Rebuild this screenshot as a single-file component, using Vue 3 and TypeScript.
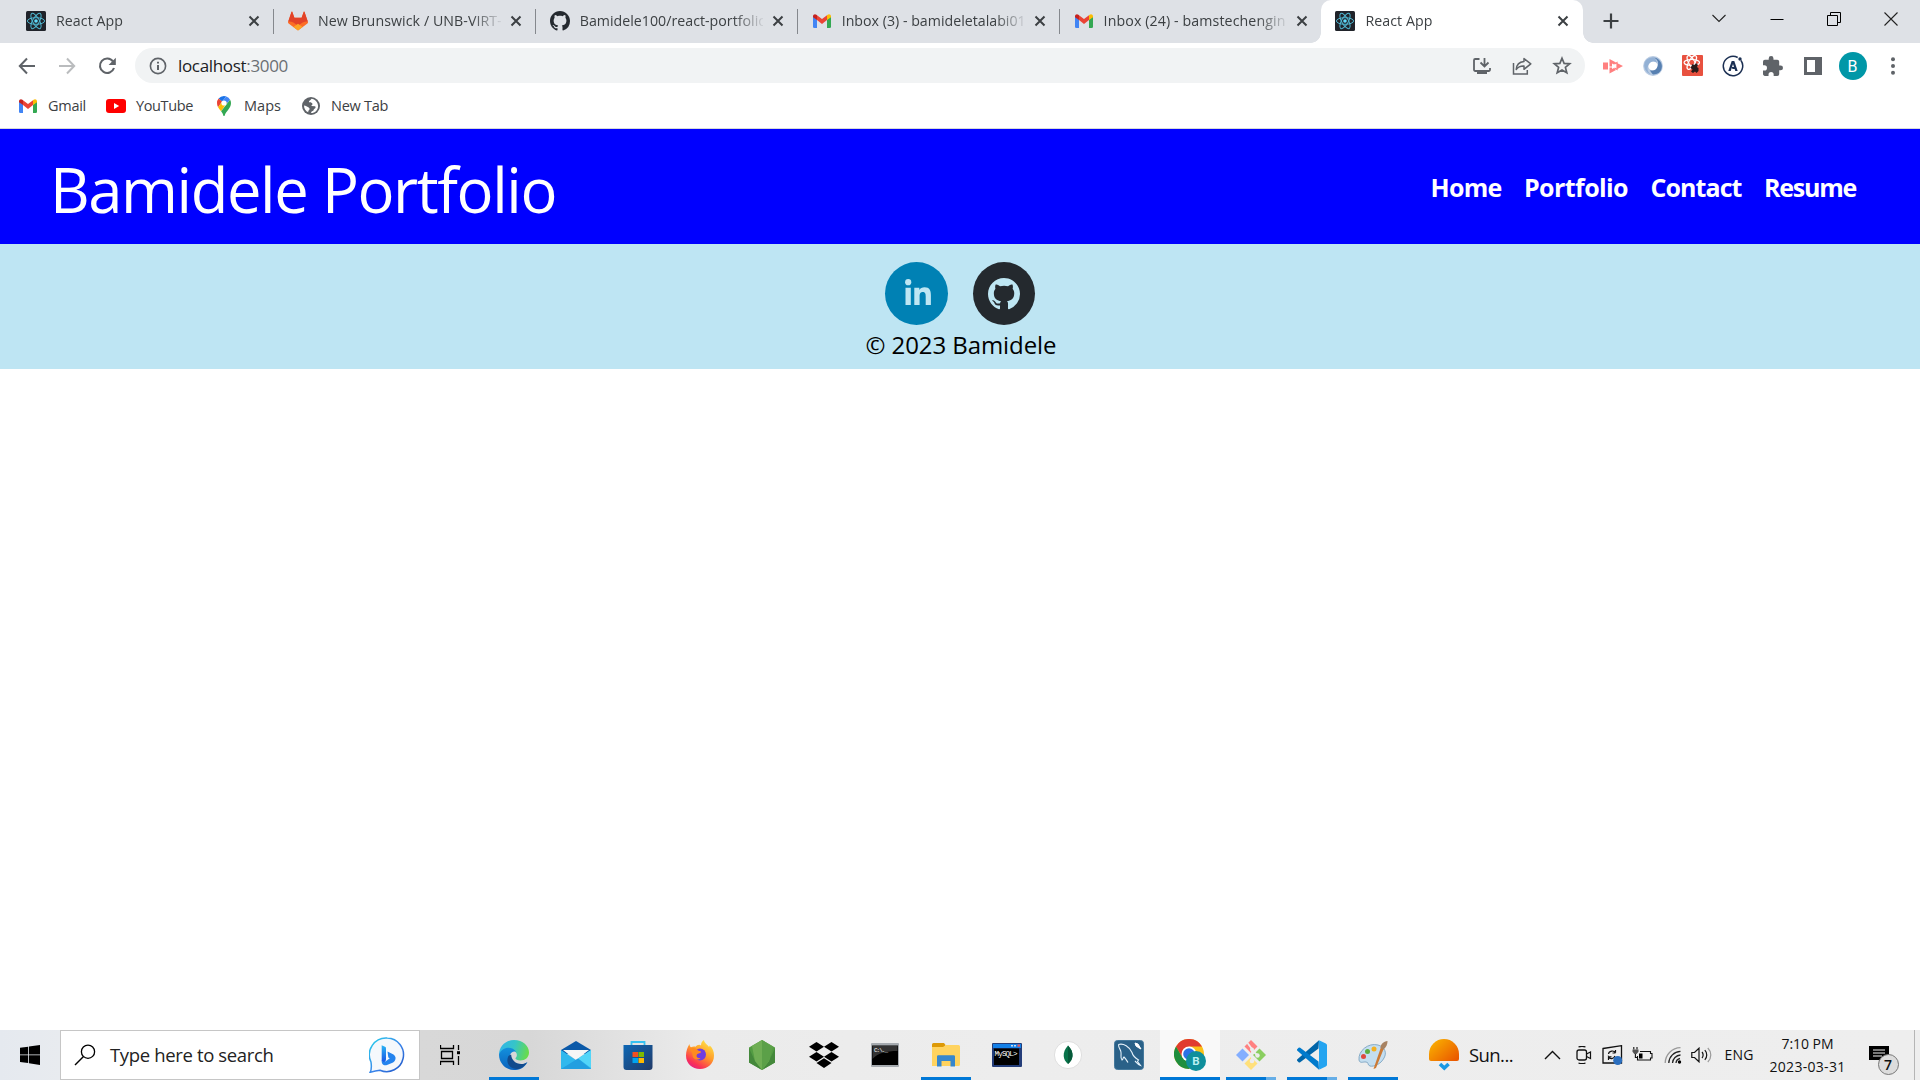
<script setup lang="ts">
import type { ObjectDirective } from 'vue'

interface Glyph { w: number; h: number; vb: string; body: string }
const g = (w: number, h: number, vb: string, body: string): Glyph => ({ w, h, vb, body })

const octocat = 'M8 0C3.58 0 0 3.58 0 8c0 3.54 2.29 6.53 5.47 7.59.4.07.55-.17.55-.38 0-.19-.01-.82-.01-1.49-2.01.37-2.53-.49-2.69-.94-.09-.23-.48-.94-.82-1.13-.28-.15-.68-.52-.01-.53.63-.01 1.08.58 1.23.82.72 1.21 1.87.87 2.33.66.07-.52.28-.87.51-1.07-1.78-.2-3.64-.89-3.64-3.95 0-.87.31-1.59.82-2.15-.08-.2-.36-1.02.08-2.12 0 0 .67-.21 2.2.82.64-.18 1.32-.27 2-.27.68 0 1.36.09 2 .27 1.53-1.04 2.2-.82 2.2-.82.44 1.1.16 1.92.08 2.12.51.56.82 1.27.82 2.15 0 3.07-1.87 3.75-3.65 3.95.29.25.54.73.54 1.48 0 1.07-.01 1.93-.01 2.2 0 .21.15.46.55.38A8.013 8.013 0 0016 8c0-4.42-3.58-8-8-8z'
const orbits = (c: string, w: number) =>
  `<g fill="none" stroke="${c}" stroke-width="${w}"><ellipse cx="10" cy="10" rx="8.6" ry="3.3"/><ellipse cx="10" cy="10" rx="8.6" ry="3.3" transform="rotate(60 10 10)"/><ellipse cx="10" cy="10" rx="8.6" ry="3.3" transform="rotate(120 10 10)"/></g>`
const gmail = g(20, 20, '0 0 20 20', '<path fill="#4285f4" d="M1 5.5l4 3V17H2.3A1.3 1.3 0 0 1 1 15.7z"/><path fill="#34a853" d="M15 8.5l4-3v10.2a1.3 1.3 0 0 1-1.3 1.3H15z"/><path fill="#ea4335" d="M5 4.2l5 3.9 5-3.9v4.9l-5 3.9-5-3.9z"/><path fill="#c5221f" d="M1 5.2c0-2 2.2-2.6 3.4-1.5L5 4.200V9.100L1 6.200z"/><path fill="#fbbc04" d="M19 5.200c0-2-2.200-2.600-3.400-1.500L15 4.200V9.100l4-2.900z"/>')

const icons: Record<string, Glyph> = {
  react: g(20, 20, '0 0 20 20', `<rect width="20" height="20" rx="1.500" fill="#20232a"/>${orbits('#4fb6d0', 1)}<circle cx="10" cy="10" r="1.800" fill="#61dafb"/>`),
  gitlab: g(20, 20, '0 0 20 20', '<path fill="#fc6d26" d="M10 19.500L.6 12.500a1.400 1.400 0 0 1-.5-1.600L3.700.6h.5l2.200 6.200h7.200L15.800.6h.5l3.600 10.300a1.400 1.400 0 0 1-.5 1.600z"/><path fill="#e24329" d="M3.500.700h.700l2.200 6.100h7.200L15.800.700h.7l3.400 10c-3-.5-6 1-9.900 4.100C6.100 11.700 3.100 10.200.1 10.700z"/><path fill="#fca326" d="M5.500 16.100L10 12.800l4.500 3.300L10 19.500z"/>'),
  github: g(20, 20, '0 0 16 16', `<path fill="#24292f" d="${octocat}"/>`),
  gmail,
  close: g(12, 12, '0 0 12 12', '<path d="M1.500 1.500l9 9m0-9l-9 9" stroke="#3c4043" stroke-width="2"/>'),
  plus: g(16, 16, '0 0 16 16', '<path d="M8 .5v15M.5 8h15" stroke="#3c4043" stroke-width="2.200"/>'),
  chevron: g(14, 9, '0 0 14 9', '<path d="M.5 1l6.500 6.500L13.500 1" fill="none" stroke="#222" stroke-width="1.100"/>'),
  minimize: g(14, 14, '0 0 14 14', '<path d="M.5 7.500h13" stroke="#000"/>'),
  restore: g(14, 14, '0 0 14 14', '<path d="M.5 3.500h10v10H.5zM3.500 3V.5h10v10H11" fill="none" stroke="#000"/>'),
  exit: g(14, 14, '0 0 14 14', '<path d="M.5.5l13 13m0-13l-13 13" stroke="#222" stroke-width="1.100"/>'),
  back: g(18, 18, '0 0 18 18', '<path d="M17 9H2m7-7.500L1.800 9 9 16.500" fill="none" stroke="#5f6368" stroke-width="2"/>'),
  forward: g(18, 18, '0 0 18 18', '<path d="M1 9h15M9 1.500L16.200 9 9 16.500" fill="none" stroke="#babcbe" stroke-width="2"/>'),
  reload: g(18, 18, '0 0 18 18', '<path d="M15 4.500A7.200 7.200 0 1 0 16 11" fill="none" stroke="#5f6368" stroke-width="2.100"/><path d="M17.800.7v7.200h-7.200z" fill="#5f6368"/>'),
  info: g(18, 18, '0 0 18 18', '<circle cx="9" cy="9" r="7.600" fill="none" stroke="#5f6368" stroke-width="1.600"/><path d="M9 8v5M9 4.700v1.900" stroke="#5f6368" stroke-width="2"/>'),
  install: g(20, 20, '0 0 20 20', '<path d="M7.500 3H3.200A1.200 1.200 0 0 0 2 4.200v9.600A1.200 1.200 0 0 0 3.200 15h13.600a1.200 1.200 0 0 0 1.200-1.200V12M12.500 2v8.500m-4-4l4 4 4-4" fill="none" stroke="#5f6368" stroke-width="1.800"/><path d="M3 14h14v2h-2v2H5v-2H3z" fill="#5f6368"/>'),
  share: g(20, 20, '0 0 20 20', '<path d="M1.500 7v11h13.800v-4" fill="none" stroke="#5f6368" stroke-width="1.500"/><path d="M12 2.500l6.800 5.400L12 13.300V10c-4-.2-6 1-7.800 3.500C4.500 9 7.500 6 12 5.500z" fill="none" stroke="#5f6368" stroke-width="1.500" stroke-linejoin="round"/>'),
  star: g(20, 20, '0 0 20 20', '<path d="M10 2.300l2.100 5.100 5.600.4-4.300 3.600 1.400 5.400L10 13.900l-4.800 2.900 1.400-5.400-4.300-3.600 5.600-.4z" fill="none" stroke="#5f6368" stroke-width="1.700"/>'),
  record: g(22, 20, '0 0 22 20', '<path d="M1 6.500h5v7H1zM7.500 3l6.500 3.600-2 2-2-1.200v3H7.500zM7.500 11.500H10v1.600l2-1.200 2 2L7.500 17.500zM15 7l6 3-6 3.200z" fill="#ff8080"/><path d="M12.500 8l2.500-1.500v7L12.500 12" fill="none" stroke="#ff8080" stroke-width="1.200"/>'),
  swirl: g(20, 20, '0 0 20 20', '<circle cx="10" cy="10" r="7.300" fill="none" stroke="#b9cbe2" stroke-width="5.200"/><path d="M10 18.500c6 0 9.500-4 8.800-9.500-.7-4-4-7-7.800-7.500 5 3 4.500 6.500 3.500 9-1.200 3-3 4.500-7.500 3.700 1 2 2 3.500 3 4.300z" fill="#5780b1"/><path d="M10.500 1.200C5 1 1 5 1.200 9.800c.2 4 3 7.400 6.500 8.500C3.500 15 4 11 6 8c1.700-2.500 4-3.200 8-1.500-1-3-2-4.500-3.500-5.300z" fill="#93b1d5"/>'),
  reactive: g(21, 21, '0 0 21 21', `<rect width="21" height="21" rx="1" fill="#e8513f"/><g transform="translate(.8 -1.500) scale(.9)">${orbits('#fff', 1.300)}</g><path d="M10.500 9l2 1 1.500-2 2 2-1 2 1.500 1v3l-2 2-1.500-1.500L11 18l-2-1.500 1.500-2L8.500 13z" fill="#281b1a"/>`),
  apollo: g(22, 22, '0 0 22 22', '<path d="M19 5.500a9.700 9.700 0 1 1-3.300-3" fill="none" stroke="#1b2f52" stroke-width="1.500"/><circle cx="18" cy="4" r="1.700" fill="#1b2f52"/><path d="M6.300 16L9.700 6h2.600l3.400 10h-2.400l-2.300-7-2.300 7z" fill="#1b2f52"/><path d="M9.500 12h4v2h-3z" fill="#1b2f52"/>'),
  puzzle: g(20, 20, '2 1 21 21', '<path fill="#5f6368" d="M20.500 11H19V7a2 2 0 0 0-2-2h-4V3.500a2.500 2.500 0 0 0-5 0V5H4a2 2 0 0 0-2 2v3.800h1.500a2.700 2.700 0 0 1 0 5.400H2V20c0 1.100.9 2 2 2h3.800v-1.500a2.700 2.700 0 0 1 5.400 0V22H17a2 2 0 0 0 2-2v-4h1.500a2.500 2.500 0 0 0 0-5z"/>'),
  panel: g(18, 18, '0 0 18 18', '<path fill="#5f6368" d="M0 0h18v18H0zM3 3v12h8V3z" fill-rule="evenodd"/>'),
  more: g(6, 18, '0 0 6 18', '<g fill="#5f6368"><circle cx="3" cy="2.200" r="2"/><circle cx="3" cy="9" r="2"/><circle cx="3" cy="15.800" r="2"/></g>'),
  youtube: g(20, 14, '0 0 20 14', '<rect width="20" height="14" rx="3" fill="#f00"/><path d="M8 4l5.200 3L8 10z" fill="#fff"/>'),
  maps: g(14, 20, '0 0 14 20', '<path d="M7 0a7 7 0 0 0-5.400 2.500l3.500 3L9.300.4A7 7 0 0 0 7 0z" fill="#1a73e8"/><path d="M1.600 2.500A7 7 0 0 0 0 7c0 1.600.4 3 1.100 4.200l4-5.700z" fill="#ea4335"/><path d="M9.300.4L5.100 5.500l3.800 3.300 4.200-5A7 7 0 0 0 9.300.4z" fill="#4285f4"/><path d="M1.100 11.200c.7 1.300 1.800 2.500 3 4l6-8.800-5-.9z" fill="#fbbc04"/><path d="M13.100 3.800l-9 11.400C5.500 17 6 18.200 6.300 19.400c.2.800 1.200.8 1.400 0C8.700 15.500 14 12.500 14 7c0-1.100-.3-2.200-.9-3.200z" fill="#34a853"/><circle cx="7" cy="7" r="2.600" fill="#fff"/>'),
  globe: g(18, 18, '0 0 18 18', '<circle cx="9" cy="9" r="9" fill="#5f6368"/><path d="M9.500 1.800c-.8 1.700-2.700 1.500-2.600 3.500 1 .6 3.300-.2 3.500 1.600.2 1.200-1.300 1.100-1.100 2.200L13 9.300c1 .5.700 2-.5 2.400-1 .4-.7 2-1.800 2.400-1 .4-1.600 1.200-1.700 2 3.800.2 7.100-2.700 7.100-7 0-3.600-3-7-6.600-7.300zM2 8.400c0 3 1.500 5.600 4.300 6.900-.3-1.500.5-1.800 1.200-2.700.4-.8-.2-2.100-1.200-2.400C5 9.800 4 8.400 2 8.400z" fill="#fff"/>'),
  linkedin: g(26, 26, '0 0 26 26', '<g fill="#bee6f3"><circle cx="3.200" cy="3.200" r="3.100"/><path d="M.5 8.700h5.300V26H.5zM9.300 8.700h5v2.400c1-1.800 2.800-2.800 5.200-2.800 5.200 0 6.400 3.400 6.400 8V26h-5.200v-8.500c0-2.200-.2-4.500-2.900-4.500-2.700 0-3.200 2.200-3.200 4.400V26H9.300z"/></g>'),
  octocat: g(32, 32, '0 0 16 16', `<path fill="#bee6f3" d="${octocat}"/>`),
  windows: g(20, 20, '0 0 20 20', '<path d="M0 2.800l8.200-1.100v7.700H0zM9 1.600L20 0v9.400H9zM0 10.300h8.200v7.800L0 17zM9 10.300h11v9.600L9 18.300z"/>'),
  search: g(22, 22, '0 0 22 22', '<circle cx="14" cy="7.700" r="6.600" fill="none" stroke="#000" stroke-width="1.300"/><path d="M9.500 12.500L1 21" stroke="#000" stroke-width="1.500"/>'),
  bing: g(36, 36, '0 0 36 36', '<defs><linearGradient id="bg1" x1="0" y1="0" x2="1" y2="1"><stop stop-color="#27d3ec"/><stop offset=".55" stop-color="#3b84ea"/><stop offset="1" stop-color="#1d53c4"/></linearGradient><linearGradient id="bg2" x1="0" y1="0" x2="0" y2="1"><stop stop-color="#2bb4f4"/><stop offset="1" stop-color="#1853e5"/></linearGradient></defs><path d="M18.300 1A16.800 16.800 0 1 1 11 33.200c-3.500.3-6.500 1-9.800 2C3 32 2.500 29.500 2 25A16.800 16.800 0 0 1 18.300 1z" fill="#f5f8fc" stroke="url(#bg1)" stroke-width="1.500"/><path d="M12.700 8.300l3.300 1.400c.7.300 1 .8 1 1.500V22c0 4-4.300 4.500-4.300 1z" fill="url(#bg2)"/><path d="M18.500 14.500l6 3c4 3 1.500 7-1 8.300L18 28c-3 1.200-6-1-5.200-5 .8 2.500 3 2 5 .5l3-2.200-1.500-.8z" fill="#2483ee"/>'),
  taskview: g(21, 20, '0 0 21 20', '<path d="M.5 0v3.500h13V0M.5 20v-3.500h13V20M1.500 6.500h11v7h-11zM18.500 0v5m0 6v9" fill="none" stroke="#000" stroke-width="1.300"/><path d="M17 6.200h3v3h-3z"/>'),
  edge: g(30, 30, '0 0 30 30', '<defs><linearGradient id="e1" x1="0" y1=".3" x2="1" y2=".5"><stop stop-color="#31b5e8"/><stop offset=".5" stop-color="#36c5c7"/><stop offset="1" stop-color="#69dc49"/></linearGradient><linearGradient id="e2" x1="0" y1="0" x2="0" y2="1"><stop stop-color="#1390dc"/><stop offset="1" stop-color="#0b62bd"/></linearGradient></defs><path d="M0 15C0 6 7 0 15 0c9 0 15 6 15 12.500 0 5-4 8-8.500 8-3.500 0-5.500-1.300-5-2.500 1.500-1.300 2-4 .3-5.800C12 7 4 7.500 0 15z" fill="url(#e1)"/><path d="M0 14.500C3 6.500 13 5.500 17.500 12c-1.500-1-6-.5-6.500 4-.5 7 6 13.500 17.500 6C25 28.500 20 30 15 30 7 30 0 23.500 0 14.500z" fill="url(#e2)"/><path d="M9 17c-3 8 5 14 12 11.500 3-1 5.500-3.500 7-6C20 27 12 21 12.200 14.500 10.500 15 9.500 15.500 9 17z" fill="#114b8d"/>'),
  mail: g(30, 28, '0 0 30 28', '<path d="M0 9L15 0l15 9v4H0z" fill="#0b59a8"/><path d="M2 9h26L15 19z" fill="#f6f6f6"/><path d="M0 9l15 10L30 9v19H0z" fill="#31b8ed"/><path d="M17 17.500L30 27V9z" fill="#53d5f8"/><path d="M0 28L17 17.500 30 28z" fill="#239fe0"/>'),
  store: g(30, 30, '0 0 30 30', '<defs><linearGradient id="s1" x1="0" y1="0" x2="1" y2="1"><stop stop-color="#0d67b5"/><stop offset="1" stop-color="#223a67"/></linearGradient></defs><path d="M8.500 6V2h13v4" fill="none" stroke="#35c1f1" stroke-width="1.800"/><path d="M.5 5h29v22a3 3 0 0 1-3 3h-23a3 3 0 0 1-3-3z" fill="url(#s1)"/><path fill="#f25022" d="M9.500 12H15v5H9.500z"/><path fill="#7fba00" d="M15.500 12H21v5h-5.500z"/><path fill="#00a4ef" d="M9.500 18H15v5H9.500z"/><path fill="#ffb900" d="M15.500 18H21v5h-5.500z"/>'),
  firefox: g(30, 30, '0 0 30 30', '<defs><linearGradient id="f1" x1=".8" y1="0" x2=".2" y2="1"><stop stop-color="#ffe94a"/><stop offset=".45" stop-color="#ff9a29"/><stop offset=".8" stop-color="#fb3553"/><stop offset="1" stop-color="#e01b8b"/></linearGradient></defs><path d="M4.500 4c0 1.500.5 2.500 1.500 3.300 1.500-.8 3-1 4.500-.6C12 4.500 15 4 16 5.500c0-2.500 1-4.500 3-5.500 0 3 3.500 4.500 5 7l.8-1.500C28 8 29 12 29 15.500 29 23.500 23 29 15 29S1 23.500 1 15.500C1 11 2.500 7 4.500 4z" fill="url(#f1)"/><circle cx="15" cy="14.500" r="6" fill="#713de0"/><path d="M4 9c4-2 8-1 9 1.500l3 1c0 2-3 1.800-4 3-1.300 2 .5 4 3.500 3.500-3 3-8 1.500-8-3C7.500 12.500 6 11 4 9z" fill="#ff8b20"/>'),
  node: g(26, 30, '0 0 26 30', '<path d="M13 0l13 7.500v15L13 30 0 22.500v-15z" fill="#539c43"/><path d="M0 8l6 13 7 9L0 22.500zM26 8l-6 13-7 9 13-7.500z" fill="#44883b"/><path d="M3 6l10-6 10 6-3 15-7 9-7-9z" fill="#6fae54"/><path d="M13 0v30l7-9 4-14z" fill="#5ba048"/>'),
  dropbox: g(30, 26, '0 0 30 26', '<path d="M7.500 0L15 4.800 7.500 9.600 0 4.800zM22.500 0L30 4.800l-7.500 4.800L15 4.800zM7.500 9.900l7.500 4.800-7.500 4.800L0 14.700zM22.500 9.900l7.500 4.800-7.500 4.800-7.500-4.800zM15 16.200l7.500 4.800L15 26l-7.500-5z"/>'),
  cmd: g(28, 24, '0 0 28 24', '<rect width="28" height="24" rx="1" fill="#a6abb0"/><path d="M1 2.500h26V22H1z" fill="#000"/><path d="M1.500 3h25v5c-11 0-20 2-25 8z" fill="#333"/><text x="3" y="8.500" fill="#fff" font-family="Liberation Mono, monospace" font-size="6" textLength="14">C:\\._</text>'),
  folder: g(28, 24, '0 0 28 24', '<path d="M0 1.500A1.500 1.500 0 0 1 1.500 0H12l1.500 2-1 3H0z" fill="#dd9906"/><path d="M0 4h11l3-2h12.500A1.500 1.500 0 0 1 28 3.500v18a1.500 1.500 0 0 1-1.500 1.500H0z" fill="#ffd35f"/><path d="M5 23.500v-10a1.300 1.300 0 0 1 1.300-1.300h15.400a1.300 1.300 0 0 1 1.300 1.300v10h-4.500V18h-9v5.500z" fill="#3787cd"/>'),
  mysql: g(30, 24, '0 0 30 24', '<rect width="30" height="24" rx="1" fill="#243d79"/><path d="M1 1h28v4H1z" fill="#1480e8"/><path d="M19 2h2v1.500h-2zM22 2h2v1.500h-2z" fill="#cde"/><path d="M25.500 1.500H28v2.200h-2.500z" fill="#e55"/><path d="M2 5.500h25V22H2z" fill="#000"/><text x="2.500" y="13" fill="#fff" font-family="Liberation Mono, monospace" font-size="7.500" textLength="23">MySQL&gt;</text>'),
  mongo: g(28, 28, '0 0 28 28', '<circle cx="14" cy="14" r="13.600" fill="#fff" stroke="#d4d4d4" stroke-width=".7"/><path d="M14 4.500c7 7 5 14.500 0 18.500-5-4-6.500-11.500 0-18.500z" fill="#08734a"/><path d="M14 4.500c7 7 5 14.500 0 18.500z" fill="#065a3a"/>'),
  workbench: g(30, 30, '0 0 30 30', '<rect x=".5" y=".5" width="29" height="29" rx="3" fill="#2a6188" stroke="#45799c"/><path d="M4.500 4.500c5-1.500 11 2 13.500 8 1 4 4 6 6.500 7.500l-1 1.500 3 4c-3-1-4-3-5.500-4.500M4.500 4.500c0 4 2.500 5 2.500 8 .5 3-1 5 1 7.500 1.500-1 1-3 2-3 2 2 3 4 4 5.500" fill="none" stroke="#e6f2fa" stroke-width="1.100"/><path d="M21 3l1 3 3 2 2 1-3-5z" fill="#fff" stroke="#fff"/>'),
  chrome: g(32, 32, '0 0 32 32', '<circle cx="15" cy="15" r="15" fill="#fbc116"/><path d="M2 7.500A15 15 0 0 1 28 7.500H15L8.500 18.700z" fill="#e13b2f"/><path d="M2 7.500A15 15 0 0 0 15 30l6.500-11.200H8.500z" fill="#1f8e3e"/><circle cx="15" cy="15" r="7.500" fill="#fff"/><circle cx="15" cy="15" r="5.800" fill="#2a72e5"/><circle cx="22" cy="22" r="10" fill="#0f8f9c"/><text x="22" y="26" text-anchor="middle" fill="#b8f0f2" font-family="Roboto, sans-serif" font-size="11.500" font-weight="700">B</text>'),
  git: g(32, 32, '0 0 32 32', '<path d="M16 1l6.500 6.500L16 14 9.500 7.500z" fill="#ff8080"/><path d="M7.500 9.500L14 16l-6.500 6.500L1 16z" fill="#83aeff"/><path d="M24.500 9.500L31 16l-6.500 6.500L18 16z" fill="#8ace60"/><path d="M16 18l6.500 6.500L16 31l-6.500-6.500z" fill="#ffe07b"/><path d="M12.500 4l4.500 6v12M17 11l5 5" fill="none" stroke="#ededed" stroke-width="1.800"/><g fill="#ededed"><circle cx="17" cy="10.500" r="2"/><circle cx="17" cy="22" r="2.300"/><circle cx="22.500" cy="16.500" r="2.200"/></g>'),
  vscode: g(30, 30, '0 0 30 30', '<path d="M21.500 8.500L3.200 22.300a1.300 1.300 0 0 1-1.600 0L.4 21a1.200 1.200 0 0 1 0-1.800L22 .2z" fill="#0065a9"/><path d="M21.500 21.500L3.200 7.700a1.300 1.300 0 0 0-1.600 0L.4 9a1.200 1.200 0 0 0 0 1.800L22 29.800z" fill="#007acc"/><path d="M22 .2l6.800 3.200A2 2 0 0 1 30 5.200v19.600a2 2 0 0 1-1.200 1.800L22 29.800c.5-.6.3-1 0-1.500V1.700c.3-.5.200-1 0-1.500z" fill="#24a4f0"/>'),
  paint: g(30, 30, '0 0 30 30', '<path d="M1 20C0 11 10 2.500 20 5c7 2 9 8 6 13-3 6-10 9-14 8-3-1-1-4-4-4-3-.5-6 2-7-2z" fill="#c4def0" stroke="#86abc6"/><circle cx="5.500" cy="16.500" r="2.500" fill="#df4940"/><circle cx="9.500" cy="11.500" r="2.500" fill="#5cae40"/><circle cx="16" cy="9" r="2.500" fill="#f3b020"/><path d="M15.500 29L23 7l3 1-8 20z" fill="#cc7a35"/><path d="M22.500 8c0-4 3-6.500 7-7 0 3-1 6-4 8.500z" fill="#a78262"/>'),
  sunset: g(30, 32, '0 0 30 32', '<defs><linearGradient id="w1" x1="0" y1="0" x2="1" y2=".8"><stop stop-color="#fbb800"/><stop offset="1" stop-color="#ea5a00"/></linearGradient></defs><path d="M2 22a2 2 0 0 1-2-2v-5a15 15 0 0 1 30 0v5a2 2 0 0 1-2 2z" fill="url(#w1)"/><path d="M11 25l4.300 4 4.300-4" fill="none" stroke="#1998e3" stroke-width="3.600"/>'),
  up: g(17, 10, '0 0 17 10', '<path d="M1 9l7.500-7.500L16 9" fill="none" stroke="#111" stroke-width="1.400"/>'),
  camera: g(16, 18, '0 0 16 18', '<rect x="1" y="4" width="9.500" height="10" rx="2" fill="none" stroke="#111" stroke-width="1.300"/><path d="M10.500 8l4-2v6.500l-4-2M2.500 1c2-.8 5-.8 7 0m-7 16c2 .8 5 .8 7 0" fill="none" stroke="#111" stroke-width="1.200"/>'),
  sync: g(21, 20, '0 0 21 20', '<path d="M1 3.500L19.500.7V18H1z" fill="none" stroke="#111" stroke-width="1.300"/><path d="M6.500 9c.5-3.500 5.500-4 7-1.200V5m0 3h-3M13 11c-1 3-5 3.500-6.500 1v3m0-3.200h3" fill="none" stroke="#111" stroke-width="1.200"/><circle cx="15.700" cy="15.500" r="4.500" fill="#2b6fbf"/>'),
  battery: g(21, 16, '0 0 21 16', '<path d="M8 4.500h10.500v2H20v4.500h-1.500v2h-13V9" fill="none" stroke="#111" stroke-width="1.100"/><path d="M1.800 0v2.500M5 0v2.500M3.400 7v3.500h2" fill="none" stroke="#111" stroke-width="1.100"/><path d="M.5 2.500h6v2.300L4.600 7H2.300L.5 4.800z" fill="#555"/><path d="M7 6.500h3.500v5H7z"/>'),
  wifi: g(18, 18, '0 0 18 18', '<g fill="none" stroke="#222" stroke-width="1.300"><path d="M12 17a5 5 0 0 1 4-4.500M8.500 17A8.500 8.500 0 0 1 16.500 9M4.800 17A12 12 0 0 1 16.500 5.400"/><path d="M1.200 17A15.500 15.500 0 0 1 16.500 1.700" stroke="#999"/></g><circle cx="15.500" cy="16" r="1.700"/>'),
  speaker: g(21, 16, '0 0 21 16', '<path d="M.8 5.500h2.700L8 1.200v13.600l-4.500-4.300H.8z" fill="none" stroke="#111" stroke-width="1.200"/><path d="M11 5c1.500 1.600 1.500 4.400 0 6M13.800 3.200c2.600 2.600 2.600 7 0 9.600" fill="none" stroke="#111" stroke-width="1.200"/><path d="M16.800 1c4 4 4 10 0 14" fill="none" stroke="#999" stroke-width="1.200"/>'),
  notice: g(20, 20, '0 0 20 20', '<path d="M0 1h20v14h-6l-4 4v-4H0z"/><path d="M4 5h12M4 8h12M4 11h9" stroke="#eee" stroke-width="1.200"/>'),
}

/* Spreads a label's letters so that it takes up the given number of pixels. */
const vFit: ObjectDirective<HTMLElement, number> = {
  mounted(el, { value }) {
    const n = (el.textContent ?? '').trim().length
    const natural = el.getBoundingClientRect().width
    el.style.letterSpacing = `${(value - natural) / n}px`
  },
}

const tabs = [
  { icon: 'react', title: 'React App', fit: 67 },
  { icon: 'gitlab', title: 'New Brunswick / UNB-VIRT-', fit: 184 },
  { icon: 'github', title: 'Bamidele100/react-portfolio', fit: 187 },
  { icon: 'gmail', title: 'Inbox (3) - bamideletalabi01', fit: 184 },
  { icon: 'gmail', title: 'Inbox (24) - bamstechengin', fit: 182 },
  { icon: 'react', title: 'React App', fit: 67, active: true },
]
const bookmarks = [
  { icon: 'gmail', title: 'Gmail', fit: 38, w: 88 },
  { icon: 'youtube', title: 'YouTube', fit: 57, w: 108 },
  { icon: 'maps', title: 'Maps', fit: 37, w: 87 },
  { icon: 'globe', title: 'New Tab', fit: 57, w: 100 },
]
const pageActions = ['install', 'share', 'star']
const extensions = ['record', 'swirl', 'reactive', 'apollo', 'puzzle', 'panel']
const links = [
  { title: 'Home', fit: 71 },
  { title: 'Portfolio', fit: 104 },
  { title: 'Contact', fit: 91 },
  { title: 'Resume', fit: 92 },
]
const apps = [
  { icon: 'edge', state: 'open' }, { icon: 'mail' }, { icon: 'store' }, { icon: 'firefox' },
  { icon: 'node' }, { icon: 'dropbox' }, { icon: 'cmd' }, { icon: 'folder', state: 'open' },
  { icon: 'mysql' }, { icon: 'mongo' }, { icon: 'workbench' }, { icon: 'chrome', state: 'focused' },
  { icon: 'git', state: 'stacked' }, { icon: 'vscode', state: 'stacked' }, { icon: 'paint', state: 'open' },
]

const Icon = (props: { name: string }) => {
  const i = icons[props.name]
  return h('svg', { width: i.w, height: i.h, viewBox: i.vb, innerHTML: i.body, class: 'glyph' })
}
Icon.props = ['name']
</script>

<script lang="ts">
import { h } from 'vue'
</script>

<template>
  <div class="screen">
    <div class="tabstrip">
      <div v-for="(t, i) in tabs" :key="i" class="tab" :class="{ active: t.active }">
        <span class="favicon"><Icon :name="t.icon" /></span>
        <span class="tab-title"><span v-fit="t.fit">{{ t.title }}</span></span>
        <Icon name="close" />
      </div>
      <div class="new-tab"><Icon name="plus" /></div>
      <div class="window-buttons">
        <span><Icon name="chevron" /></span>
        <span><Icon name="minimize" /></span>
        <span><Icon name="restore" /></span>
        <span><Icon name="exit" /></span>
      </div>
    </div>

    <div class="toolbar">
      <div class="cell"><Icon name="back" /></div>
      <div class="cell"><Icon name="forward" /></div>
      <div class="cell"><Icon name="reload" /></div>
      <div class="omnibox">
        <Icon name="info" />
        <span class="url"><span v-fit="110">localhost<span class="port">:3000</span></span></span>
        <div v-for="a in pageActions" :key="a" class="cell"><Icon :name="a" /></div>
      </div>
      <div v-for="e in extensions" :key="e" class="cell"><Icon :name="e" /></div>
      <div class="cell"><span class="avatar">B</span></div>
      <div class="cell"><Icon name="more" /></div>
    </div>

    <div class="bookmarks">
      <div v-for="b in bookmarks" :key="b.title" class="bookmark" :style="{ width: b.w + 'px' }">
        <span class="mark"><Icon :name="b.icon" /></span>
        <span v-fit="b.fit">{{ b.title }}</span>
      </div>
    </div>

    <header class="site-header">
      <h1><span v-fit="506">Bamidele Portfolio</span></h1>
      <nav>
        <a v-for="l in links" :key="l.title"><span v-fit="l.fit">{{ l.title }}</span></a>
      </nav>
    </header>
    <footer class="site-footer">
      <div class="social">
        <a class="linkedin"><Icon name="linkedin" /></a>
        <a class="gh"><Icon name="octocat" /></a>
      </div>
      <p><span v-fit="191">© 2023 Bamidele</span></p>
    </footer>
    <main></main>

    <div class="taskbar">
      <div class="start"><Icon name="windows" /></div>
      <div class="search">
        <Icon name="search" />
        <span class="hint"><span v-fit="163.5">Type here to search</span></span>
        <Icon name="bing" />
      </div>
      <div class="start"><Icon name="taskview" /></div>
      <div class="apps">
        <div v-for="a in apps" :key="a.icon" class="app" :class="a.state"><Icon :name="a.icon" /></div>
      </div>
      <div class="tray">
        <Icon name="sunset" />
        <span class="weather"><span v-fit="44">Sun...</span></span>
        <Icon name="up" />
        <Icon name="camera" />
        <Icon name="sync" />
        <Icon name="battery" />
        <Icon name="wifi" />
        <Icon name="speaker" />
        <span class="lang"><span v-fit="29">ENG</span></span>
        <div class="clock">
          <span v-fit="52">7:10 PM</span>
          <span v-fit="76">2023-03-31</span>
        </div>
        <div class="notice"><Icon name="notice" /><b>7</b></div>
      </div>
    </div>
  </div>
</template>

<style>
body { margin: 0; overflow: hidden; }
.glyph { display: block; flex: none; }
</style>

<style scoped>
.screen { width: 1920px; height: 1080px; display: flex; flex-direction: column; background: #fff; font-family: "Open Sans", "Noto Sans", sans-serif; color: #3c4043; overflow: hidden; white-space: pre; }
.tabstrip { height: 43px; background: #dee1e6; display: flex; padding-left: 12px; flex: none; }
.tab { width: 261.9px; box-sizing: border-box; display: flex; align-items: center; padding: 0 13px 1px 14px; position: relative; font-size: 14.2px; flex: none; }
.tab + .tab:not(.active)::before { content: ""; position: absolute; left: -1px; top: 9px; width: 1px; height: 25px; background: #85888d; }
.favicon { width: 20px; margin-right: 10px; display: flex; justify-content: center; }
.tab-title { width: 183px; margin-right: 9px; overflow: hidden; line-height: 22px; -webkit-mask-image: linear-gradient(90deg, #000 153px, transparent 186px); mask-image: linear-gradient(90deg, #000 153px, transparent 186px); }
.tab.active { background: #fff; border-radius: 10px 10px 0 0; }
.tab.active::before, .tab.active::after { content: ""; position: absolute; bottom: 0; width: 10px; height: 10px; }
.tab.active::before { left: -10px; background: radial-gradient(circle at 0 0, transparent 9.5px, #fff 10px); }
.tab.active::after { right: -10px; background: radial-gradient(circle at 100% 0, transparent 9.5px, #fff 10px); }
.new-tab { margin: 13px 0 0 20px; }
.window-buttons { margin-left: auto; display: flex; height: 37px; align-items: center; }
.window-buttons span { width: 57.3px; display: flex; justify-content: center; }

.toolbar { height: 45px; padding: 0 8px 0 7px; display: flex; align-items: center; flex: none; }
.cell { width: 40px; height: 35px; display: flex; align-items: center; justify-content: center; flex: none; }
.omnibox { width: 1450px; height: 35px; margin: 0 7.500px 0 8px; box-sizing: border-box; padding: 0 3px 0 14px; background: #f1f3f4; border-radius: 18px; display: flex; align-items: center; flex: none; }
.url { flex: 1; margin-left: 11px; font-size: 17px; line-height: 35px; color: #202124; }
.port { color: #6b6f73; }
.avatar { width: 28px; height: 28px; border-radius: 50%; background: #0097a7; color: #fff; font: 16px/29px Roboto, sans-serif; text-align: center; }

.bookmarks { height: 40px; border-bottom: 1px solid #d5d8dc; padding: 0 0 0 18px; display: flex; align-items: center; flex: none; font-size: 14.500px; line-height: 22px; }
.bookmark { display: flex; align-items: center; padding-bottom: 5px; flex: none; }
.mark { width: 20px; margin-right: 10px; display: flex; justify-content: center; }

.site-header { height: 115px; background: #00f; color: #fff; display: flex; justify-content: space-between; padding: 0 64px 0 50px; flex: none; }
h1 { margin: 0; font-weight: 400; font-size: 61.500px; line-height: 120px; }
nav { display: flex; gap: 22.500px; font-size: 25px; font-weight: 700; line-height: 116px; }
.site-footer { height: 125px; background: #bee5f3; color: #000; display: flex; flex-direction: column; align-items: center; flex: none; }
.social { display: flex; gap: 25px; margin-top: 18px; }
.social a { width: 63px; height: 63px; border-radius: 50%; display: flex; align-items: center; justify-content: center; }
.social .linkedin { background: #0081b4; box-sizing: border-box; padding: 0 0 3px 2px; width: 63px; }
.social .gh { background: #24292e; width: 62px; }
.site-footer p { margin: 2px 0 0 2px; font-size: 24px; line-height: 36px; }
main { flex: 1; }

.taskbar { height: 50px; flex: none; display: flex; background: linear-gradient(90deg, #e5e9ef 0, #e8ebef 60px, #d8d8d8 420px, #d7d7d7 530px, #ebebeb 700px, #ededed 1000px, #eee); color: #111; }
.start { width: 60px; display: flex; align-items: center; justify-content: center; flex: none; }
.search { width: 360px; box-sizing: border-box; border: 1px solid #c6c6c6; background: #fff; display: flex; align-items: center; padding: 0 14px 0 13px; flex: none; }
.hint { flex: 1; margin-left: 14px; font-size: 18.500px; line-height: 50px; color: #222; }
.apps { display: flex; gap: 1px; margin-left: 4px; flex: none; }
.app { width: 60px; height: 50px; display: flex; align-items: center; justify-content: center; position: relative; }
.app:nth-child(-n+5) { margin-right: 1px; }
.app::after { position: absolute; left: 5px; bottom: 0; width: 50px; height: 3px; }
.open::after, .focused::after, .stacked::after { content: ""; background: #0078d7; }
.focused { background: #f9f9f9; }
.focused::after { left: 0; width: 60px; }
.stacked::after { background: linear-gradient(90deg, #0078d7 40px, #66aee7 40px); }
.tray { flex: 1; display: flex; align-items: center; margin-left: 26px; font-size: 14px; }
.weather { width: 74.500px; margin: 0 0 0 10px; font-size: 18.500px; line-height: 50px; flex: none; }
.tray > .glyph { margin-right: 11px; }
.tray > .glyph:nth-of-type(1) { margin-right: 0; }
.tray > .glyph:nth-of-type(2) { margin-right: 15px; }
.tray > .glyph:nth-of-type(3) { margin-right: 10px; }
.tray > .glyph:nth-of-type(4) { margin-right: 9px; }
.tray > .glyph:nth-of-type(5) { margin-right: 11px; }
.tray > .glyph:nth-of-type(6) { margin-right: 9px; }
.tray > .glyph:nth-of-type(7) { margin-right: 13px; }
.lang { width: 45px; line-height: 50px; flex: none; }
.clock { width: 76px; display: flex; flex-direction: column; align-items: center; line-height: 23px; flex: none; }
.notice { position: relative; margin-left: 23px; width: 45px; height: 50px; border-right: 1px solid #b5b5b5; display: flex; align-items: center; flex: none; }
.notice b { position: absolute; left: 9px; top: 24px; width: 19px; height: 19px; border: 1px solid #777; border-radius: 50%; background: #dcdcdc; font-size: 14px; line-height: 19px; text-align: center; font-weight: 600; }
</style>
